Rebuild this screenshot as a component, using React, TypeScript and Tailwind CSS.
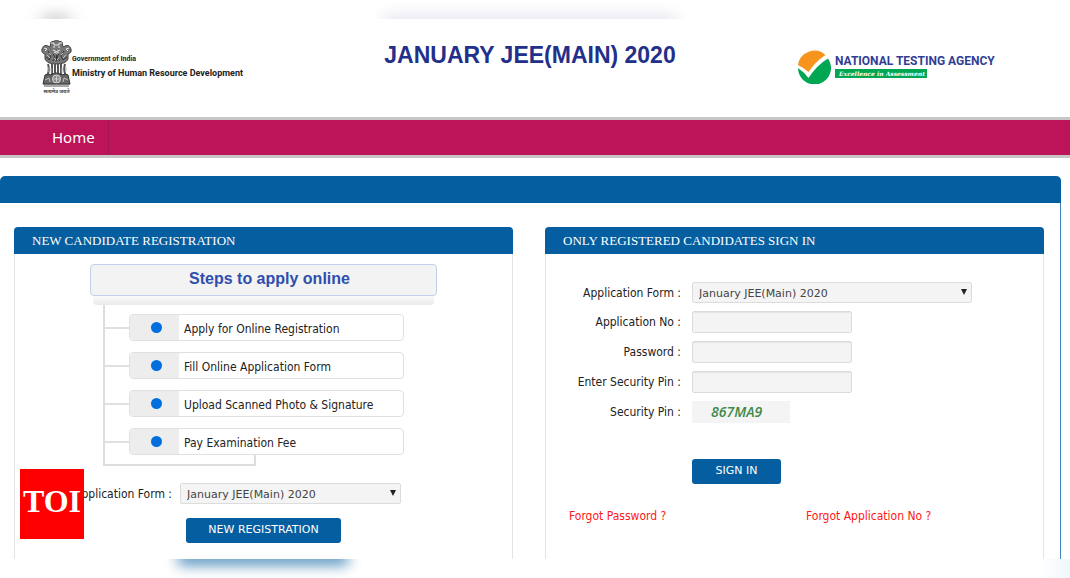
// src/App.tsx
import React, { useState } from 'react';

const steps = [
  'Apply for Online Registration',
  'Fill Online Application Form',
  'Upload Scanned Photo & Signature',
  'Pay Examination Fee',
];

const labelCls = "font-['DejaVu_Sans_Condensed','DejaVu_Sans',sans-serif] text-[12px] leading-4 text-[#222]";
const inputCls = 'h-[22px] w-40 rounded-xs border border-[#dcdcdc] bg-[#f4f4f4] px-1.5 text-[11px] shadow-[inset_0_1px_1px_#e4e4e4]';
const buttonCls = 'h-[25px] rounded-[3px] bg-[#055e9f] text-[11px] text-white';

function Emblem() {
  return (
    <svg className="shrink-0" width="31" height="54" viewBox="0 0 31 54" fill="none" aria-hidden="true">
      <path d="M10 2 Q15.500 -1 21 2 L22 7 Q28 3 30 9 Q31 13 27 14 L27 19 Q25 24 15.500 24 Q6 24 4 19 L4 14 Q0 13 1 9 Q3 3 9 7Z" fill="#777" stroke="#444" />
      <path d="M10 3h3v2h5V3h3M12 7h2M17 7h2M12 10q3.500 3 7 0M13 12q2.500 2 5 0M3 8l3 1-2 2M28 8l-3 1 2 2" stroke="#e8e8e8" />
      <path d="M7 11l3 5-2 4M23 11l-3 5 2 4M12 14l2 3-2 4M18 14l-2 3 3 4M5 17l4 3M26 17l-4 3M15.500 15v6" stroke="#333" />
      <path d="M8 13l2 2M22 13l-2 2M6 15l3 3M25 15l-3 3M13 18l2 2M18 18l-2 2" stroke="#bbb" />
      <path d="M7 24q2 6-1 12M11 24v11M14 24v9M17 24v9M20 24v11M24 24q-2 6 1 12" stroke="#555" strokeWidth="2" />
      <path d="M7 27v5M10 28v5M21 28v5M25 27v4" stroke="#bbb" />
      <path d="M4 35q4-2 6 0 5-4 11 0 3-2 6 0l2 9H2z" fill="#666" stroke="#333" />
      <circle cx="15.500" cy="39" r="4" fill="#888" stroke="#ddd" />
      <path d="M15.500 36v6M12.500 39h6M4 40l4-2 1 4M27 40l-4-2-1 4" stroke="#ddd" strokeWidth="0.800" />
      <path d="M2 44h27M3 46h25" stroke="#555" />
      <text x="15.500" y="53" textAnchor="middle" fontSize="5" fontWeight="bold" fill="#444" fontFamily="Noto Sans, sans-serif">सत्यमेव जयते</text>
    </svg>
  );
}

function NtaLogo() {
  return (
    <svg className="shrink-0" width="34" height="34" viewBox="0 0 34 34" aria-hidden="true">
      <path d="M1 15A16.500 16.500 0 0 1 28.500 5Q18 12 11.500 22Q7 18 1 15Z" fill="#f7941e" />
      <path d="M1 18Q7 22 11.500 28Q20 15 31 8.500A16.500 16.500 0 1 1 1 18Z" fill="#00a651" />
    </svg>
  );
}

function FormSelect({ id }: { id: string }) {
  const [value, setValue] = useState('jan');
  return (
    <div className="relative">
      <select
        id={id}
        value={value}
        onChange={(e: React.ChangeEvent<HTMLSelectElement>) => setValue(e.target.value)}
        className="block h-[21px] w-full appearance-none rounded-xs border border-[#dcdcdc] bg-[#f4f4f4] px-1.5 pt-[3px] text-[11px] text-[#444]"
      >
        <option value="jan">January JEE(Main) 2020</option>
      </select>
      <svg className="pointer-events-none absolute top-[7px] right-[5px]" width="6" height="6" viewBox="0 0 6 6" aria-hidden="true">
        <path d="M0 0H6L3 6Z" fill="#222" />
      </svg>
    </div>
  );
}

function Panel({ title, children }: { title: string; children: React.ReactNode }) {
  return (
    <section className="flex flex-col">
      <h2 className="h-[27px] rounded-t bg-[#055e9f] pl-[18px] font-['Liberation_Serif',serif] text-[13px] leading-7 text-white">{title}</h2>
      <div className="h-[305px] border-x border-[#e4e4e4]">{children}</div>
    </section>
  );
}

export default function App() {
  const [form, setForm] = useState({ appNo: '', password: '', pin: '' });

  const handle = (e: React.ChangeEvent<HTMLInputElement>) =>
    setForm({ ...form, [e.target.name]: e.target.value });

  return (
    <div className="relative overflow-hidden bg-white font-['DejaVu_Sans',sans-serif]">
      {/* soft strip above the page */}
      <div className="flex h-[19px] items-end overflow-hidden">
        <div className="ml-[42px] h-1 w-7 translate-y-1 bg-[#555] blur-[8px]" />
        <div className="ml-[314px] h-1 w-[292px] translate-y-1 bg-[#23308b] opacity-40 blur-[8px]" />
      </div>

      <header className="flex h-[98px] items-start justify-between pr-[79px] pl-[41px]">
        <div className="mt-[21px] flex w-[222px] items-start">
          <Emblem />
          <div className="mt-[11px] font-['Roboto',sans-serif] font-bold whitespace-nowrap text-[#222]">
            <p className="text-[7px] leading-4">Government of India</p>
            <p className="text-[9px] leading-3">Ministry of Human Resource Development</p>
          </div>
        </div>
        <h1 className="mt-5 font-['Liberation_Sans',sans-serif] text-[23px] leading-8 font-bold text-[#23308b]">JANUARY JEE(MAIN) 2020</h1>
        <div className="mt-[31px] flex w-[194px] items-start gap-1">
          <NtaLogo />
          <div className="mt-[3px] whitespace-nowrap">
            <p className="font-['Roboto',sans-serif] text-[12px] leading-4 font-bold text-[#323e94]">NATIONAL TESTING AGENCY</p>
            <p className="w-[92px] bg-[#00a651] pl-1 font-['DejaVu_Serif',serif] text-[6px] leading-[9px] font-bold text-white italic">Excellence in Assessment</p>
          </div>
        </div>
      </header>

      <nav className="flex h-[41px] border-y-3 border-[#c6c6c6] bg-[#bd1358]">
        <a href="#" className="border-r border-[#a01850] pr-[13px] pl-[52px] font-['Noto_Sans',sans-serif] text-[15px] leading-[35px] text-white">Home</a>
      </nav>

      <main className="mt-[18px] mr-[9px] rounded-t-[5px] border-r border-[#3f86bd]">
        <div className="-mr-px h-[27px] rounded-t-[5px] bg-[#055e9f]" />
        <div className="grid grid-cols-2 gap-8 pt-6 pr-4 pl-[14px]">
          <Panel title="NEW CANDIDATE REGISTRATION">
            <div className="mx-auto mt-[10px] w-[347px]">
              <h3 className="h-8 rounded border border-[#c3cfe9] bg-[#f3f3f3] pl-3 text-center font-['Liberation_Sans',sans-serif] text-base leading-7 font-bold text-[#2f4fae]">Steps to apply online</h3>
              <div className="mx-[3px] h-[9px] rounded-b bg-linear-to-b from-[#fafafa] to-[#eaeaea]" />
              <ol className="ml-[13px] flex flex-col gap-[11px] border-l-2 border-[#ddd] pt-[9px]">
                {steps.map((step) => (
                  <li key={step} className="flex items-center">
                    <span className="h-0.5 w-6 bg-[#e0e0e0]" />
                    <div className="flex h-[27px] w-[275px] overflow-hidden rounded border border-[#e0e0e0]">
                      <span className="flex w-[49px] items-center justify-center bg-[#ededed] pl-1">
                        <span className="size-[11px] rounded-full bg-[#006edc]" />
                      </span>
                      <span className="pl-[5px] font-['DejaVu_Sans_Condensed','DejaVu_Sans',sans-serif] text-[12px] leading-7 text-[#222]">{step}</span>
                    </div>
                  </li>
                ))}
              </ol>
              <div className="ml-[13px] h-[11px] w-[153px] border-2 border-t-0 border-[#ddd]" />
            </div>
            <form onSubmit={(e) => e.preventDefault()}>
              <div className="mt-[17px] flex items-center gap-2">
                <label htmlFor="newForm" className={labelCls + ' w-[157px] text-right'}>Application Form :</label>
                <div className="w-[221px]"><FormSelect id="newForm" /></div>
              </div>
              <button className={buttonCls + ' mt-[14px] ml-[171px] w-[155px]'}>NEW REGISTRATION</button>
            </form>
          </Panel>

          <Panel title="ONLY REGISTERED CANDIDATES SIGN IN">
            <form onSubmit={(e) => e.preventDefault()} className="pt-7">
              <div className="grid grid-cols-[135px_280px] items-center gap-x-[11px] gap-y-2">
                <label htmlFor="signForm" className={labelCls + ' text-right'}>Application Form :</label>
                <FormSelect id="signForm" />
                <label htmlFor="appNo" className={labelCls + ' text-right'}>Application No :</label>
                <input id="appNo" name="appNo" value={form.appNo} onChange={handle} className={inputCls} />
                <label htmlFor="password" className={labelCls + ' text-right'}>Password :</label>
                <input id="password" name="password" type="password" value={form.password} onChange={handle} className={inputCls} />
                <label htmlFor="pin" className={labelCls + ' text-right'}>Enter Security Pin :</label>
                <input id="pin" name="pin" value={form.pin} onChange={handle} className={inputCls} />
                <span className={labelCls + ' text-right'}>Security Pin :</span>
                <span className="h-[22px] w-[98px] bg-[#f4f4f4] pl-[19px] font-['Open_Sans',sans-serif] text-sm leading-[22px] font-semibold text-[#3c8a48] italic">867MA9</span>
              </div>
              <button className={buttonCls + ' mt-9 ml-[146px] w-[89px]'}>SIGN IN</button>
              <div className="mt-6 grid grid-cols-2 pl-[23px] font-['DejaVu_Sans_Condensed','DejaVu_Sans',sans-serif] text-[12px] leading-4 text-[#ff1616]">
                <a href="#">Forgot Password ?</a>
                <a href="#">Forgot Application No ?</a>
              </div>
            </form>
          </Panel>
        </div>
      </main>

      {/* soft strip below the page */}
      <div className="flex h-[19px] justify-between overflow-hidden">
        <div className="-mt-2 ml-[178px] h-[14px] w-[170px] bg-[#055e9f] opacity-70 blur-[7px]" />
        <div className="h-[19px] w-7 bg-linear-to-r from-white to-[#eff6fa]" />
      </div>

      <div className="absolute bottom-[39px] left-5 h-[70px] w-16 bg-[#f00] text-center font-['Liberation_Serif',serif] text-[32px] leading-[64px] font-bold text-white">TOI</div>
    </div>
  );
}
